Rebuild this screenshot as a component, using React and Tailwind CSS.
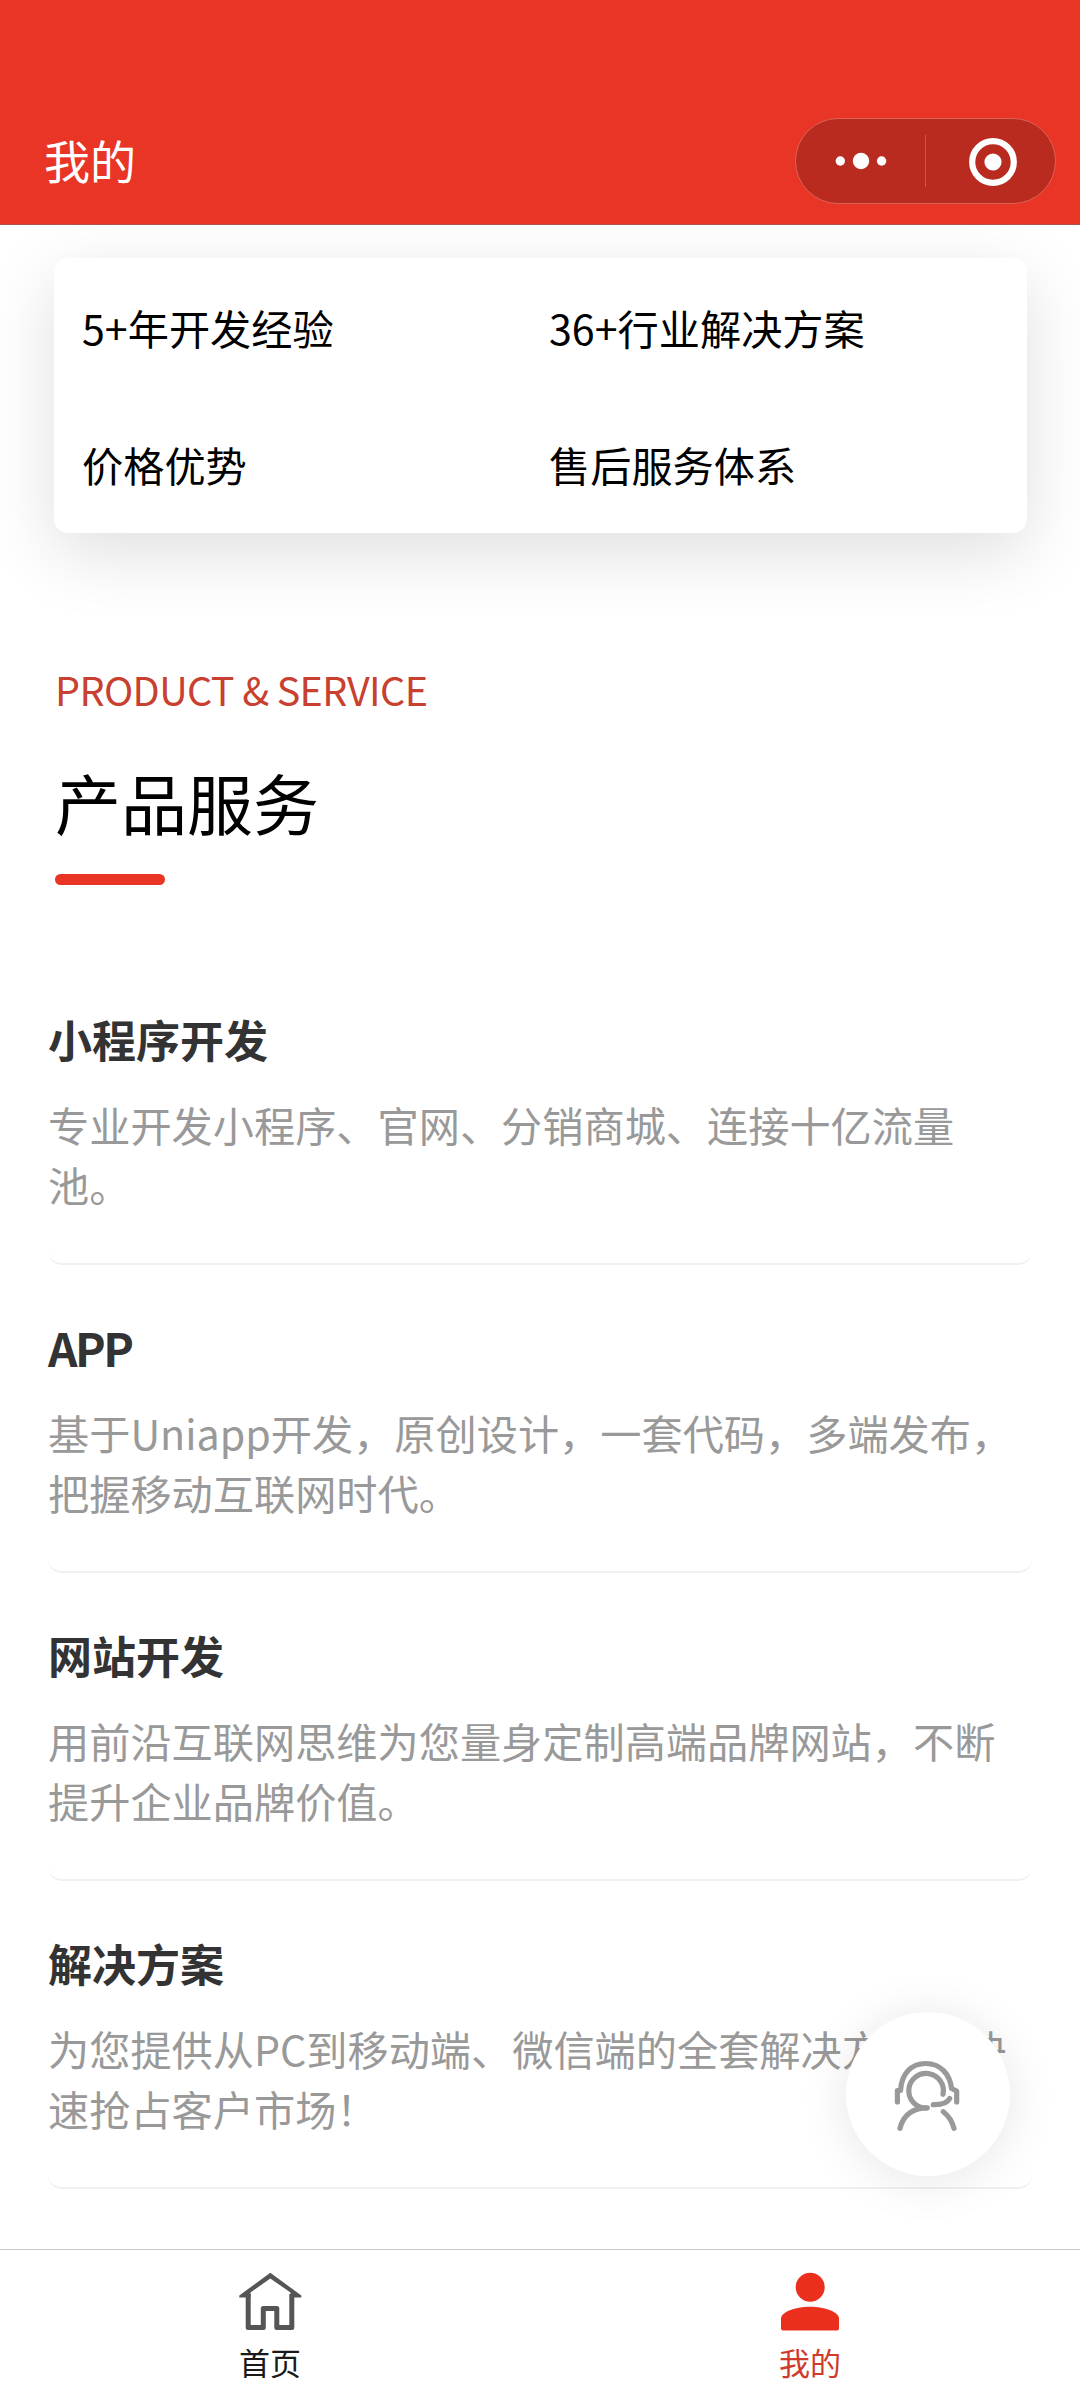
import React from "react";

const advantages = ["5+年开发经验", "36+行业解决方案", "价格优势", "售后服务体系"];

const services = [
  { title: "小程序开发", desc: "专业开发小程序、官网、分销商城、连接十亿流量池。" },
  { title: "APP", desc: "基于Uniapp开发，原创设计，一套代码，多端发布，把握移动互联网时代。", latin: true },
  { title: "网站开发", desc: "用前沿互联网思维为您量身定制高端品牌网站，不断提升企业品牌价值。" },
  { title: "解决方案", desc: "为您提供从PC到移动端、微信端的全套解决方案，快速抢占客户市场！" },
];

function Header() {
  return (
    <header className="flex h-[225px] shrink-0 items-end justify-between border-b border-[#a8584f] bg-[#e93526] pr-6 pb-5 pl-11">
      <h1 className="pb-[11px] text-[46px] leading-[68px] text-white">我的</h1>
      <div className="flex h-[86px] w-[261px] items-center rounded-full border border-[#dc6257] bg-[#b92a1f]">
        <div className="flex w-[129px] justify-center">
          <svg width="52" height="18" viewBox="0 0 52 18" fill="#fff">
            <circle cx="5.3" cy="9" r="4.7" />
            <circle cx="26" cy="9" r="8.2" />
            <circle cx="46.6" cy="9" r="4.7" />
          </svg>
        </div>
        <div className="h-[52px] w-px bg-[#cf564b]" />
        <div className="flex flex-1 justify-center pt-0.5 pl-[5px]">
          <svg width="48" height="48" viewBox="0 0 48 48">
            <circle cx="24" cy="24" r="20.8" fill="none" stroke="#fff" strokeWidth="6.2" />
            <circle cx="24" cy="24" r="8.6" fill="#fff" />
          </svg>
        </div>
      </div>
    </header>
  );
}

function ServiceItem({ title, desc, latin }) {
  return (
    <li className="h-[308px] rounded-[14px] border-b-2 border-[#f0f0f0] pt-[50px]">
      <h3 className={`leading-[64px] font-bold text-[#333] ${latin ? "text-[46px] tracking-[-2.4px]" : "text-[44px]"}`}>{title}</h3>
      <p className="mt-[23px] text-[41.2px] leading-[60px] text-[#999]">{desc}</p>
    </li>
  );
}

function ServiceButton() {
  return (
    <button className="absolute right-[70px] bottom-[73px] flex size-[164px] items-center justify-center rounded-full bg-white pt-[3px] pr-0.5 shadow-[0_4px_50px_rgba(0,0,0,0.1)]">
      <svg width="66" height="72" viewBox="0 0 66 72" fill="none" stroke="#999" strokeWidth="5.2" strokeLinecap="round" strokeLinejoin="round">
        <path d="M3.400 42V30.500H6.500C7.500 14 17 3.500 31.700 3.500S56 14 57.500 28.500l5.200 2.500V42" />
        <path d="M49 34.300A17.300 17.300 0 1 0 32 48" />
        <path d="M39.200 44.700c7 .2 13.500-.6 16.500-6.200" />
        <path d="M33.300 47.800C19 47.500 9 55.500 6 68.300" />
        <path d="M49.300 51.700c5.200 4 9 10 10.700 16.600" />
      </svg>
    </button>
  );
}

function TabBar() {
  return (
    <nav className="flex h-[151px] shrink-0 border-t border-[#c8c8c8] bg-white">
      <a className="flex flex-1 flex-col items-center pt-[22px] text-[#1a1a1a]">
        <svg width="64" height="60" viewBox="0 0 64 60">
          <path d="M1.300 23.500 32.300.7 63.300 23.500V25.500H52.500V20.500L32.300 6.500 12.500 20.500V25.500H1.300Z" fill="#555" />
          <path d="M10.200 22V55.500H25.300V36.500H38.800V55.500H53.800V22" fill="none" stroke="#555" strokeWidth="5" strokeLinejoin="round" />
        </svg>
        <span className="mt-[7px] text-[31px] leading-[46px]">首页</span>
      </a>
      <a className="flex flex-1 flex-col items-center pt-[22px] text-[#d03a2c]">
        <svg width="64" height="60" viewBox="0 0 64 60" fill="#ea301d">
          <circle cx="32.200" cy="15.300" r="14.500" />
          <path d="M3 56.500V46.500C3 40 17 34.700 32 34.700s29 5.300 29 11.800v10q0 2-2 2H5q-2 0-2-2Z" />
        </svg>
        <span className="mt-[7px] text-[31px] leading-[46px]">我的</span>
      </a>
    </nav>
  );
}

export default function App() {
  return (
    <div className="relative flex h-[2400px] w-[1080px] flex-col overflow-hidden bg-white font-['Noto_Sans_CJK_SC',sans-serif]">
      <Header />

      <main className="relative flex-1 overflow-hidden px-12 pt-[33px]">
        <section className="mr-[5px] ml-1.5 grid h-[275px] grid-cols-[467px_1fr] grid-rows-2 items-center rounded-[14px] bg-white pt-0.5 pl-7 text-[41.2px] text-black shadow-[0_20px_70px_rgba(0,0,0,0.13)]">
          {advantages.map((item) => (
            <span key={item}>{item}</span>
          ))}
        </section>

        <section className="mt-[126px] pl-[7px]">
          <p className="text-[39.500px] leading-[60px] tracking-[-0.600px] text-[#c8402f]">PRODUCT &amp; SERVICE</p>
          <h2 className="mt-[33px] text-[66px] leading-[98px] text-black">产品服务</h2>
          <div className="mt-[24px] h-[11px] w-[110px] rounded-full bg-[#e93526]" />
        </section>

        <ul className="mt-[72px]">
          {services.map((s) => (
            <ServiceItem key={s.title} title={s.title} desc={s.desc} latin={s.latin} />
          ))}
        </ul>

        <ServiceButton />
      </main>

      <TabBar />
    </div>
  );
}
